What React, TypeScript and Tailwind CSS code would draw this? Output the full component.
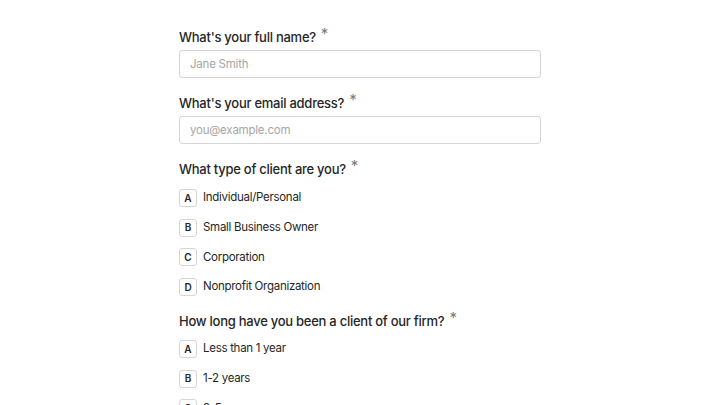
const clientTypes = [
  "Individual/Personal",
  "Small Business Owner",
  "Corporation",
  "Nonprofit Organization",
];

const durations = ["Less than 1 year", "1-2 years", "3-5 years", "More than 5 years"];

const letters = ["A", "B", "C", "D", "E"];

function Label({ children }: { children: string }) {
  return (
    <div className="flex h-5 items-center text-[13px] font-medium leading-5 tracking-[-0.02em] text-[#262626]">
      <span>{children}</span>
      <span className="ml-[5px] -translate-y-[3px] text-[15px] font-normal text-[#7a7a7a]">*</span>
    </div>
  );
}

function TextField({ label, placeholder }: { label: string; placeholder: string }) {
  return (
    <div className="flex flex-col gap-[3px]">
      <Label>{label}</Label>
      <input
        type="text"
        placeholder={placeholder}
        className="h-[28px] w-full rounded-[3px] border border-[#d6d6d6] bg-white px-[10px] text-[11.5px] tracking-[-0.02em] text-[#262626] outline-none placeholder:text-[#a6a6a6]"
      />
    </div>
  );
}

function Choice({ label, options, gapTop }: { label: string; options: string[]; gapTop: string }) {
  return (
    <div className="flex flex-col">
      <Label>{label}</Label>
      <div className={`flex flex-col gap-[11.7px] ${gapTop}`}>
        {options.map((option, i) => (
          <button key={option} type="button" className="flex h-[18px] items-center gap-[6px] text-left">
            <span className="flex h-[18px] w-[18px] items-center justify-center rounded-[3px] border border-[#d6d6d6] bg-white text-[10px] font-semibold text-[#262626]">
              {letters[i]}
            </span>
            <span className="text-[11.5px] tracking-[-0.025em] text-[#262626]">{option}</span>
          </button>
        ))}
      </div>
    </div>
  );
}

export default function App() {
  return (
    <div className="h-screen overflow-hidden bg-white font-['Inter','Liberation_Sans',sans-serif]">
      <div className="mx-auto flex w-[362px] flex-col pt-[27px]">
        <TextField label="What's your full name?" placeholder="Jane Smith" />
        <div className="mt-[15px]">
          <TextField label="What's your email address?" placeholder="you@example.com" />
        </div>
        <div className="mt-[15px]">
          <Choice label="What type of client are you?" options={clientTypes} gapTop="mt-[10px]" />
        </div>
        <div className="mt-[15px]">
          <Choice
            label="How long have you been a client of our firm?"
            options={durations}
            gapTop="mt-[9px]"
          />
        </div>
      </div>
    </div>
  );
}
